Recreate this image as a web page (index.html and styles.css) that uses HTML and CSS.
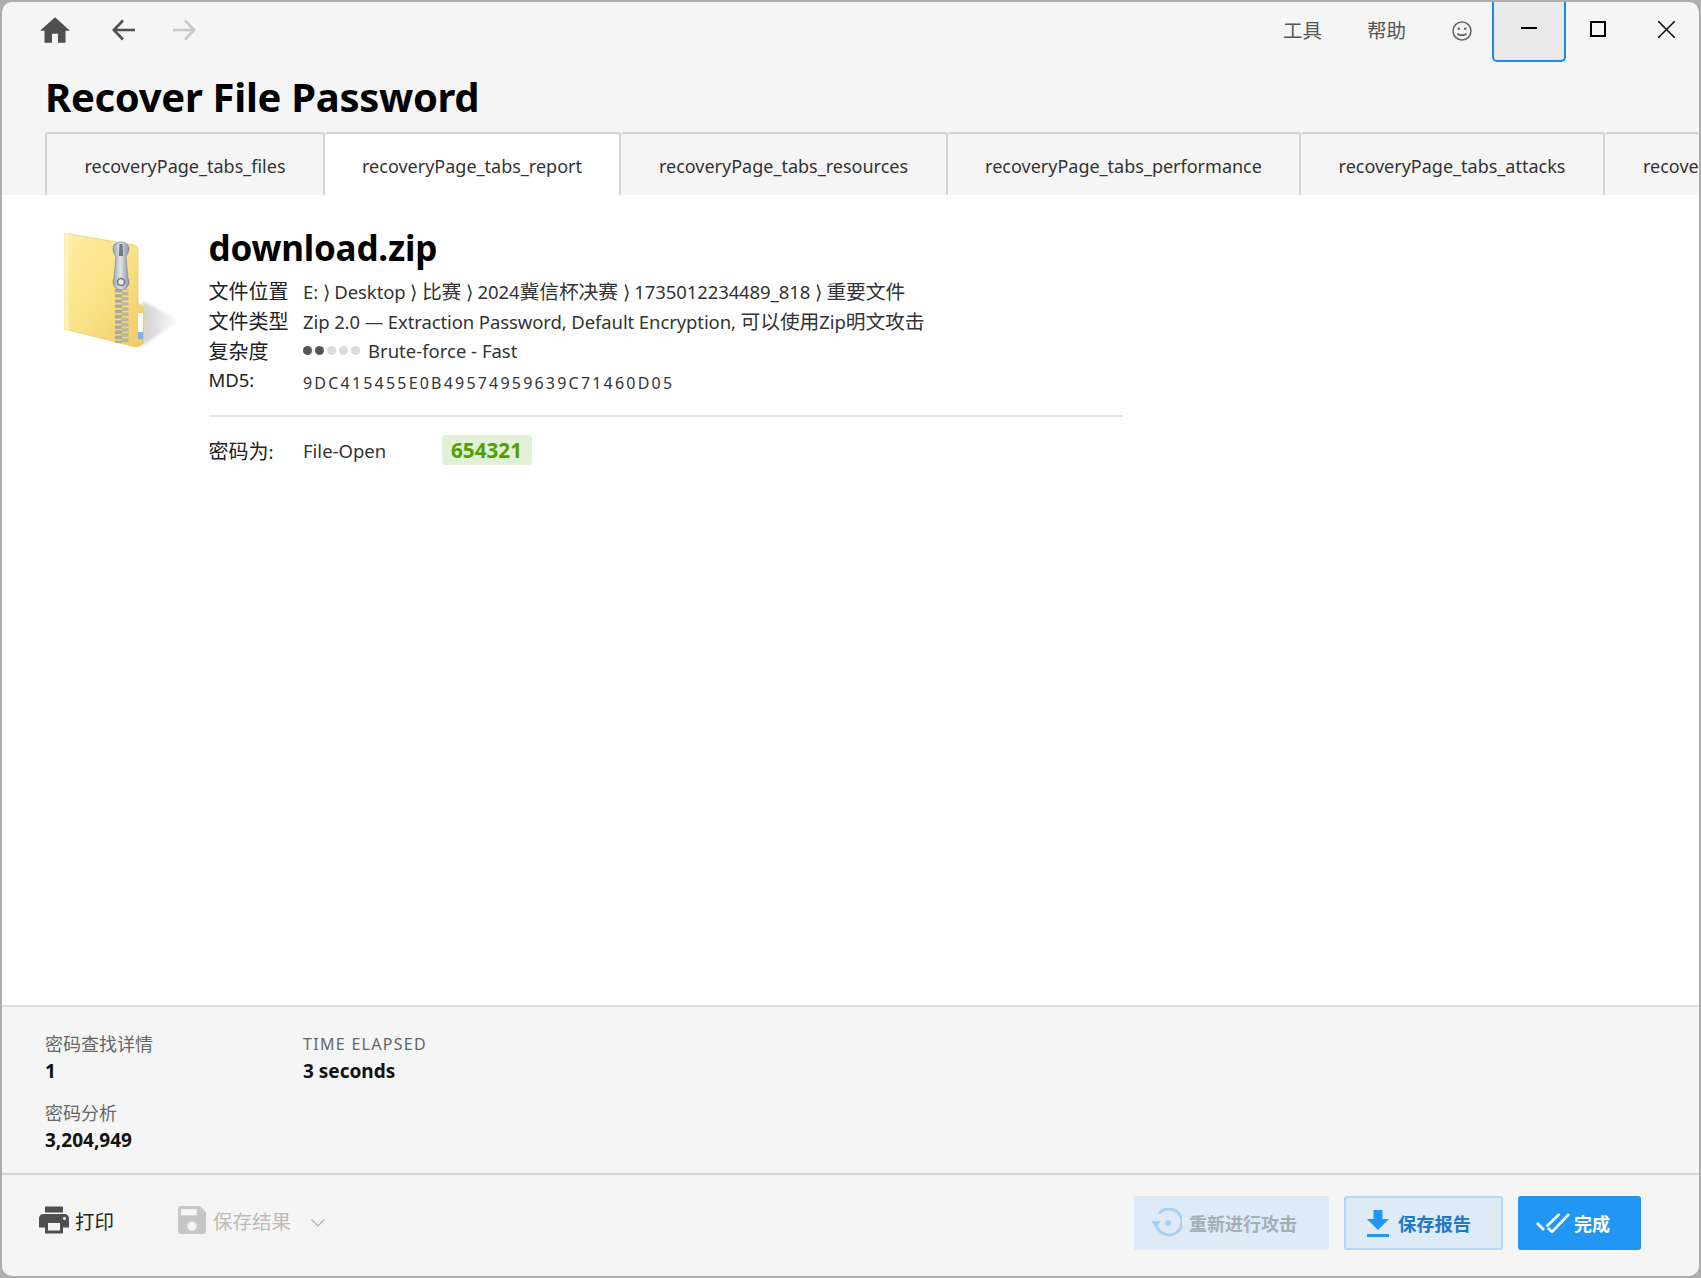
FILE: index.html
```html
<!DOCTYPE html>
<html lang="zh">
<head>
<meta charset="utf-8">
<title>Recover File Password</title>
<link rel="stylesheet" href="styles.css">
</head>
<body>
<div class="window">
  <header class="head">
    <div class="toolbar">
      <div class="nav">
        <svg class="ic-home" viewBox="2 3 20 17"><path d="M10 20v-6h4v6h5v-8h3L12 3 2 12h3v8z"/></svg>
        <svg class="ic-arrow" viewBox="0 0 24 24"><path d="M23 12H3M11 2.500L1.800 12l9.200 9.500"/></svg>
        <svg class="ic-arrow dim" viewBox="0 0 24 24"><path d="M1 12h20M13 2.500l9.200 9.500-9.200 9.500"/></svg>
      </div>
      <div class="menu">
        <span class="menu-item">工具</span>
        <span class="menu-item">帮助</span>
        <svg class="ic-smile" viewBox="0 0 20 20"><circle cx="10" cy="10" r="9"/><circle class="eye" cx="6.800" cy="7.800" r="1.300"/><circle class="eye" cx="13.200" cy="7.800" r="1.300"/><path d="M5.500 12.500c1.200 2.200 7.800 2.200 9 0"/></svg>
      </div>
      <div class="winctl">
        <div class="winbtn focused"><svg viewBox="0 0 16 16"><path d="M0 8h16"/></svg></div>
        <div class="winbtn max"><svg viewBox="0 0 16 16"><path d="M1 1h14v14H1z"/></svg></div>
        <div class="winbtn thin"><svg viewBox="0 0 16 16"><path d="M0 0l16 16M16 0L0 16"/></svg></div>
      </div>
    </div>
    <h1 class="title">Recover File Password</h1>
    <nav class="tabs">
      <div class="tab t1">recoveryPage_tabs_files</div>
      <div class="tab t2 active">recoveryPage_tabs_report</div>
      <div class="tab t3">recoveryPage_tabs_resources</div>
      <div class="tab t4">recoveryPage_tabs_performance</div>
      <div class="tab t5">recoveryPage_tabs_attacks</div>
      <div class="tab t6">recove</div>
    </nav>
  </header>

  <main class="report">
    <svg class="zip" viewBox="0 0 120 116">
      <defs>
        <linearGradient id="fold" x1="0" y1="0" x2="1" y2="1">
          <stop offset="0" stop-color="#fdeea6"/>
          <stop offset=".55" stop-color="#f9e084"/>
          <stop offset="1" stop-color="#eec963"/>
        </linearGradient>
        <linearGradient id="shade" x1="0" y1="0" x2="1" y2="0">
          <stop offset="0" stop-color="#cfcfcf"/>
          <stop offset=".5" stop-color="#e6e6e6"/>
          <stop offset="1" stop-color="#ffffff"/>
        </linearGradient>
        <linearGradient id="metal" x1="0" y1="0" x2="1" y2="0">
          <stop offset="0" stop-color="#98a3b0"/>
          <stop offset=".45" stop-color="#dfe4ea"/>
          <stop offset="1" stop-color="#8a94a0"/>
        </linearGradient>
        <filter id="soft" x="-20%" y="-20%" width="140%" height="140%"><feGaussianBlur stdDeviation="1.500"/></filter>
      </defs>
      <path fill="url(#shade)" filter="url(#soft)" d="M78 68l38 19-36 25z"/>
      <path fill="url(#fold)" stroke="#e6c766" stroke-width=".6" d="M0 0l70 12q4 1 4 4v54l4 3q2 1 2 4v30q0 5-4 6l-5 1L0 96z"/>
      <path fill="#fff6c8" opacity=".6" d="M0 0l5 1v96l-5-1z"/>
      <rect x="74" y="80" width="5" height="26" fill="#fdfdf5"/>
      <rect x="74" y="99" width="5" height="7" fill="#7fb2ea"/>
      <g class="teeth">
        <path d="M54.500 56v54"/>
        <path class="off" d="M61 56v54"/>
      </g>
      <path fill="url(#metal)" stroke="#7d8791" stroke-width=".7" d="M57 9c5 0 8 3 8 7 0 4-3 6-3 9l2 20a8 8 0 1 1-14 0l2-20c0-3-3-5-3-9 0-4 3-7 8-7z"/>
      <path fill="#6f7884" d="M55.500 11h3l.6 12h-4.200z"/>
      <circle cx="57" cy="49" r="3.500" fill="#e6e9ed" stroke="#6f7884" stroke-width="1.600"/>
    </svg>
    <section class="info">
      <h2 class="filename">download.zip</h2>
      <div class="row"><span class="label cjk">文件位置</span><span class="value tight">E: ⟩ Desktop ⟩ <span class="cjk">比赛</span> ⟩ 2024<span class="cjk">冀信杯决赛</span> ⟩ 1735012234489_818 ⟩ <span class="cjk">重要文件</span></span></div>
      <div class="row"><span class="label cjk">文件类型</span><span class="value tight">Zip 2.0 — Extraction Password, Default Encryption, <span class="cjk">可以使用</span>Zip<span class="cjk">明文攻击</span></span></div>
      <div class="row"><span class="label cjk">复杂度</span><span class="value complexity"><span class="dots"><i class="on"></i><i class="on"></i><i></i><i></i><i></i></span>Brute-force - Fast</span></div>
      <div class="row md5"><span class="label">MD5:</span><span class="value hash">9DC415455E0B49574959639C71460D05</span></div>
      <hr class="rule">
      <div class="row pass"><span class="label"><span class="cjk">密码为</span>:</span><span class="value kind">File-Open</span><span class="badge">654321</span></div>
    </section>
  </main>

  <section class="stats">
    <div class="stat-grid">
      <div class="stat"><div class="stat-k">密码查找详情</div><div class="stat-v">1</div></div>
      <div class="stat"><div class="stat-k caps">TIME ELAPSED</div><div class="stat-v">3 seconds</div></div>
      <div class="stat"><div class="stat-k">密码分析</div><div class="stat-v">3,204,949</div></div>
    </div>
  </section>

  <footer class="foot">
    <div class="foot-left">
      <div class="tool">
        <svg class="ic-print" viewBox="2 3 20 18"><path d="M19 8H5c-1.660 0-3 1.340-3 3v6h4v4h12v-4h4v-6c0-1.660-1.340-3-3-3zm-3 11H8v-5h8v5zm3-7c-.55 0-1-.45-1-1s.45-1 1-1 1 .45 1 1-.45 1-1 1zm-1-9H6v4h12V3z"/></svg>
        <span>打印</span>
      </div>
      <div class="tool off">
        <svg class="ic-save" viewBox="3 3 18 18"><path d="M17 3H5a2 2 0 0 0-2 2v14a2 2 0 0 0 2 2h14a2 2 0 0 0 2-2V7l-4-4zm-5 16a3 3 0 1 1 0-6 3 3 0 0 1 0 6zm3-10H5V5h10v4z"/></svg>
        <span>保存结果</span>
        <svg class="ic-chev" viewBox="0 0 14 8"><path d="M.5.500L7 7l6.500-6.500"/></svg>
      </div>
    </div>
    <div class="foot-right">
      <button class="btn retry">
        <svg class="ic-retry" viewBox="0 0 31 30"><path class="ring" d="M8 5.500a13 13 0 1 1-3 10"/><path class="fill" d="M0 13h10l-5 6.500z"/><circle class="fill" cx="17" cy="15" r="3"/></svg>
        重新进行攻击
      </button>
      <button class="btn save">
        <svg class="ic-dl" viewBox="0 0 22 27"><path d="M6.500 0h9v9H22L11 20 0 9h6.500zM0 24h22v3H0z"/></svg>
        保存报告
      </button>
      <button class="btn done">
        <svg class="ic-check" viewBox="0 0 34 20"><path d="M1 10l7 7M10.500 13.500L23.500 1M12 15l4 4L33 1"/></svg>
        完成
      </button>
    </div>
  </footer>
</div>
</body>
</html>
```

FILE: styles.css
```css
* { box-sizing: border-box; }
html, body { margin: 0; height: 100%; }
body {
  background: #aeaeae;
  overflow: hidden;
  font-family: "Noto Sans", "Noto Sans CJK SC", sans-serif;
  color: #333;
  padding: 2px;
}
.window {
  width: 1697px;
  height: 1274px;
  background: #f5f5f5;
  border-radius: 10px;
  overflow: hidden;
  display: flex;
  flex-direction: column;
}

/* header */
.head { height: 193px; display: flex; flex-direction: column; flex: none; }
.toolbar { height: 60px; display: flex; align-items: flex-start; flex: none; }
.nav { display: flex; align-items: center; height: 56px; padding-left: 38px; flex: 1; }
.ic-home { width: 30px; height: 26px; fill: #4f4f4f; }
.ic-arrow {
  width: 24px; height: 24px; fill: none; stroke: #4f4f4f; stroke-width: 2.600;
  margin-left: 42px;
}
.ic-arrow.dim { stroke: #c8c8c8; margin-left: 36px; }
.menu { display: flex; align-items: center; height: 56px; padding-right: 20px; }
.menu-item { font-size: 19.500px; color: #555; margin: -2px 45px 0 0; }
.menu-item + .menu-item { margin-right: 46px; }
.ic-smile { width: 20px; height: 20px; fill: none; stroke: #666; stroke-width: 1.600; margin-top: 1px; }
.ic-smile .eye { fill: #666; stroke: none; }
.winctl { display: flex; align-items: flex-start; }
.winbtn {
  width: 70px; height: 60px; display: flex; align-items: center; justify-content: center;
  padding-bottom: 6px;
}
.winbtn svg { width: 16px; height: 16px; fill: none; stroke: #000; stroke-width: 2; }
.winbtn.max { width: 63px; }
.winbtn.thin { padding-left: 5px; }
.winbtn.thin svg { stroke-width: 1.400; width: 17px; height: 17px; }
.winbtn.focused {
  width: 74px; background: #e9e9e9; border: 2.500px solid #1e88e5; border-top: 0;
  border-radius: 0 0 5px 5px;
}
.title {
  margin: 8px 0 0 43px; font-size: 40px; line-height: 54px; font-weight: 700; color: #000;
  height: 64px; letter-spacing: -0.300px;
}
.tabs { display: flex; height: 63px; flex: none; padding-left: 43px; overflow: hidden; }
.tab {
  flex: none; height: 63px; font-size: 18px; color: #333; padding-top: 2px;
  display: flex; align-items: center; justify-content: center;
  background: #f5f5f5;
  border: 2px solid #d2d2d2; border-bottom: 0; border-left: 0; border-radius: 3px 3px 0 0;
}
.t1 { width: 280px; border-left: 2px solid #d2d2d2; }
.t2 { width: 296px; }
.t3 { width: 327px; }
.t4 { width: 353px; }
.t5 { width: 304px; }
.t6 { flex: 1; justify-content: flex-start; padding-left: 38px; border-right: 0; }
.tab.active { background: #fff; }

/* report */
.report {
  flex: 1; background: #fff; display: flex; align-items: flex-start;
  padding: 38px 0 0 62px; border-bottom: 2px solid #dcdcdc;
}
.zip { width: 120px; height: 116px; flex: none; }
.teeth path { fill: none; stroke: #a6a99d; stroke-width: 7; stroke-dasharray: 3.400 1.800; }
.teeth path.off { stroke: #b4b6ab; stroke-dashoffset: 2.400; }
.info { width: 914px; margin-left: 24.500px; margin-top: -9px; }
.filename { margin: 0 0 3px; font-size: 35px; line-height: 48px; font-weight: 700; color: #000; letter-spacing: -0.200px; }
.row { display: flex; align-items: center; height: 30px; font-size: 18.500px; color: #333; }
.cjk { font-size: 20px; }
.value .cjk { font-size: 19.800px; }
.label { width: 94.500px; flex: none; color: #222; }
.tight { letter-spacing: -0.100px; }
.complexity { display: flex; align-items: center; }
.dots { display: flex; gap: 3px; margin-right: 8px; }
.dots i { width: 9px; height: 9px; border-radius: 50%; background: #dcdcdc; }
.dots i.on { background: #555; }
.md5 .label { margin-top: -2px; }
.hash { font-size: 16px; letter-spacing: 2.200px; padding-top: 5px; }
.rule { border: 0; border-top: 2px solid #e6e6e6; margin: 20px 0 18px; }
.kind { width: 139px; flex: none; }
.badge {
  height: 30px; padding: 0 10px 0 9px; background: #e3f0d8; border-radius: 4px;
  color: #52a000; font-weight: 700; font-size: 20.700px; line-height: 31px;
}

/* stats */
.stats { height: 168px; flex: none; padding: 24px 0 0 43px; border-bottom: 2px solid #d6d6d6; }
.stat-grid { display: grid; grid-template-columns: 258px 258px; row-gap: 14px; }
.stat-k { font-size: 18px; line-height: 26px; color: #666; }
.stat-k.caps { font-size: 16px; letter-spacing: 1.300px; }
.stat-v { font-size: 19px; line-height: 29px; font-weight: 700; color: #111; }

/* footer */
.foot {
  flex: none; height: 101px; display: flex; justify-content: space-between; align-items: flex-start;
  padding: 21px 58px 0 37px;
}
.foot-left { display: flex; align-items: center; height: 48px; gap: 64px; }
.tool { display: flex; align-items: center; font-size: 19.500px; color: #222; }
.tool.off { color: #bbb; }
.ic-print { width: 30px; height: 28px; fill: #4f4f4f; margin-right: 6px; }
.ic-save { width: 28px; height: 28px; fill: #c6c6c6; margin-right: 7px; }
.ic-chev { width: 14px; height: 8px; fill: none; stroke: #aaa; stroke-width: 1.200; margin-left: 20px; margin-top: 6px; }
.foot-right { display: flex; gap: 15px; }
.btn {
  height: 54px; border: 0; border-radius: 3px; display: flex; align-items: center; justify-content: flex-start;
  font-family: inherit; font-size: 18px; font-weight: 700; padding: 0;
}
.retry { width: 195px; background: #deeaf5; color: #a3aeb8; gap: 7px; padding-left: 17px; }
.ic-retry { width: 31px; height: 30px; }
.ic-retry .ring { fill: none; stroke: #a6d1f6; stroke-width: 3; }
.ic-retry .fill { fill: #a6d1f6; }
.save { width: 159px; background: #deebf6; color: #2079c7; border: 2px solid #b5d7f4; gap: 9px; padding-left: 21px; font-size: 18.300px; }
.ic-dl { width: 22px; height: 27px; fill: #2196f3; }
.done { width: 123px; background: #2196f3; color: #fff; gap: 4px; padding-left: 18px; }
.ic-check { width: 34px; height: 20px; fill: none; stroke: #fff; stroke-width: 2.600; }
```
